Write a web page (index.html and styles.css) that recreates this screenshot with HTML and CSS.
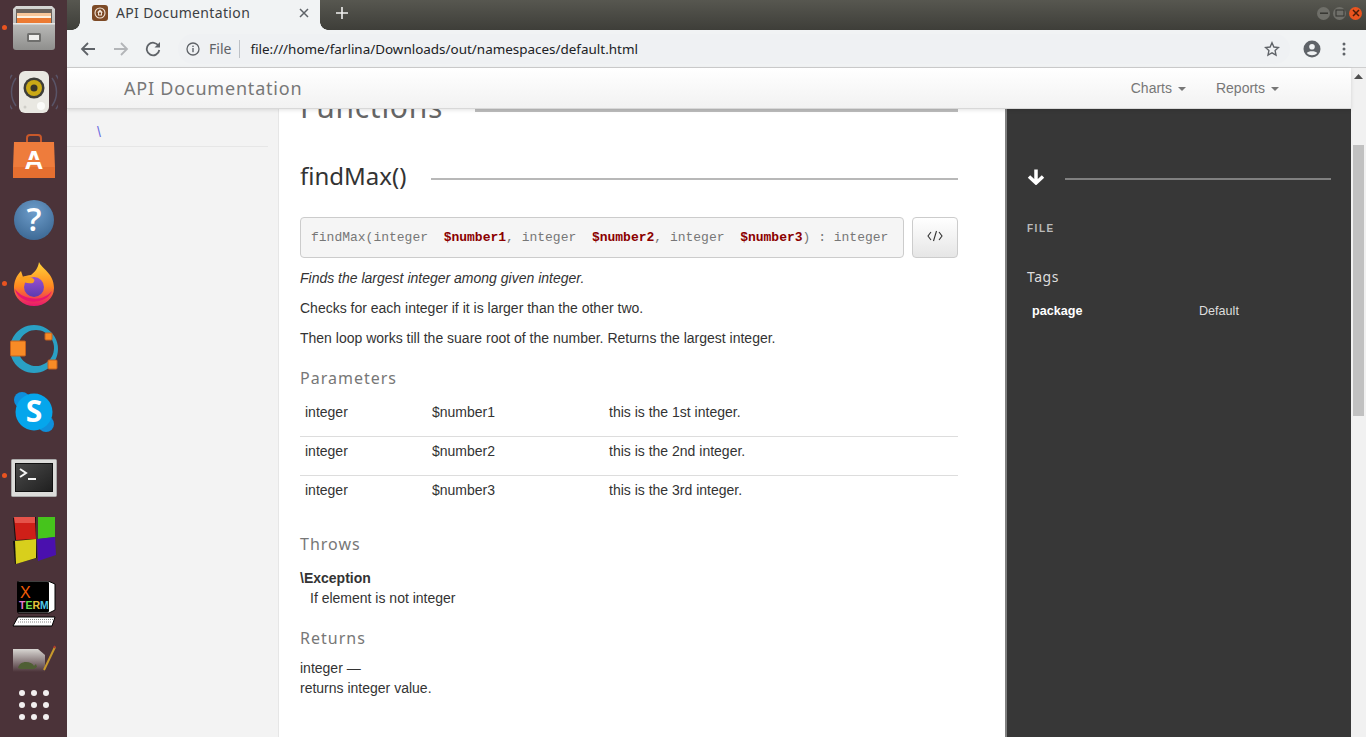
FILE: index.html
```html
<!DOCTYPE html>
<html lang="en">
<head>
    <meta charset="UTF-8">
    <title>API Documentation</title>
    <link rel="stylesheet" href="styles.css">
</head>
<body>
<div class="desktop">
    <aside class="dock">
        <div class="dock-item running">
            <svg width="42" height="44" viewBox="0 0 42 44">
                <defs><linearGradient id="cab" x1="0" y1="0" x2="0" y2="1"><stop offset="0" stop-color="#d6d6d4"/><stop offset="1" stop-color="#8f8f8d"/></linearGradient></defs>
                <path d="M3 0h36l3 3v38q0 3-3 3H3q-3 0-3-3V3z" fill="url(#cab)"/>
                <rect x="3" y="3" width="36" height="14" fill="#6b625c"/>
                <rect x="4" y="7" width="34" height="3" fill="#f9c79a"/>
                <rect x="4" y="10" width="34" height="2" fill="#fff1e0"/>
                <rect x="4" y="12" width="34" height="5" fill="#ec7a32"/>
                <rect x="0" y="17" width="42" height="1.500" fill="#e8e8e6"/>
                <rect x="14" y="27" width="14" height="9" rx="1.500" fill="#6f6f6d"/>
                <rect x="16" y="29" width="10" height="5" fill="#efefed"/>
            </svg>
        </div>
        <div class="dock-item">
            <svg width="48" height="44" viewBox="0 0 48 44">
                <g fill="none" stroke="#6f86ad" stroke-width="1.500" opacity=".4"><path d="M6 8a24 24 0 0 0 0 28"/><path d="M2 5a29 29 0 0 0 0 34"/><path d="M42 8a24 24 0 0 1 0 28"/><path d="M46 5a29 29 0 0 1 0 34"/></g>
                <rect x="9" y="1" width="30" height="42" rx="6" fill="#e9e8e2"/>
                <circle cx="24" cy="18" r="10.500" fill="#3d3d38"/>
                <circle cx="24" cy="18" r="8" fill="#c9a916"/>
                <circle cx="24" cy="18" r="3.500" fill="#38362a"/>
                <circle cx="31" cy="36" r="4" fill="#fbfbf9"/>
                <circle cx="15" cy="37" r="1.500" fill="#cfcec8"/>
            </svg>
        </div>
        <div class="dock-item">
            <svg width="42" height="44" viewBox="0 0 42 44">
                <path d="M14 8V4q0-3 3-3h8q3 0 3 3v4" fill="none" stroke="#c8582a" stroke-width="2"/>
                <path d="M1 8h40l1 26v10H0V34z" fill="#ee7c3c"/>
                <rect x="0" y="33" width="42" height="11" fill="#e56f30"/>
                <text x="21" y="35" class="store-mark">A</text>
                <rect x="12" y="26" width="18" height="2" fill="#ee7c3c"/>
            </svg>
        </div>
        <div class="dock-item">
            <svg width="46" height="46" viewBox="-3 -3 46 46">
                <defs><radialGradient id="helpball" cx=".5" cy=".3" r=".8"><stop offset="0" stop-color="#6e9dca"/><stop offset="1" stop-color="#37638f"/></radialGradient></defs>
                <circle cx="20" cy="20" r="20" fill="url(#helpball)"/>
                <text x="20" y="31" class="help-mark">?</text>
            </svg>
        </div>
        <div class="dock-item running">
            <svg width="42" height="44" viewBox="0 0 42 44">
                <defs>
                    <linearGradient id="fox" x1="0" y1="0" x2="0" y2="1"><stop offset="0" stop-color="#ffd43a"/><stop offset=".55" stop-color="#ff8a1f"/><stop offset="1" stop-color="#e8166f"/></linearGradient>
                    <linearGradient id="globe" x1="0" y1="0" x2="0" y2="1"><stop offset="0" stop-color="#9a4fd0"/><stop offset="1" stop-color="#5b3bb0"/></linearGradient>
                </defs>
                <path d="M26 0c2 6 15 11 15 26a20 18 0 0 1-40 0C1 20 3 14 8 9l2 6c2-1 5-2 8-2 4-3 7-7 8-13z" fill="url(#fox)"/>
                <path d="M2 27a19 15 0 0 0 37 2c-6 7-14 9-22 7C10 35 5 31 2 27z" fill="#e8166f"/>
                <circle cx="21" cy="25" r="10" fill="url(#globe)"/>
                <path d="M6 16c4-2 9-2 13 0 3 1 3 3 1 5-4 1-10 0-14-5z" fill="#f9a11f"/>
            </svg>
        </div>
        <div class="dock-item">
            <svg width="48" height="49" viewBox="0 0 48 49">
                <path fill-rule="evenodd" d="M24 1a24 24 0 1 1-.01 0zM26 6a18 18 0 1 0 .01 0z" fill="#2aa0c4"/>
                <rect x="0.500" y="17" width="15" height="15" rx="1" fill="#f88b26" stroke="#c5611c"/>
                <rect x="35" y="9" width="7" height="7" rx="1" fill="#f88b26" stroke="#c5611c"/>
                <rect x="38" y="36" width="9" height="9" rx="1" fill="#f88b26" stroke="#c5611c"/>
            </svg>
        </div>
        <div class="dock-item">
            <svg width="42" height="42" viewBox="0 0 42 42">
                <circle cx="9" cy="9" r="8" fill="#0f8fdb"/>
                <circle cx="33" cy="33" r="8" fill="#0f8fdb"/>
                <circle cx="21" cy="21" r="18.500" fill="#05a6ec"/>
                <text x="21" y="31" class="skype-mark">S</text>
            </svg>
        </div>
        <div class="dock-item running">
            <svg class="term-icon" width="46" height="38" viewBox="0 0 46 38">
                <defs><linearGradient id="termbg" x1="0" y1="0" x2="1" y2="1"><stop offset="0" stop-color="#4a4a4a"/><stop offset="1" stop-color="#1f1f1f"/></linearGradient></defs>
                <rect x="0.500" y="0.500" width="45" height="37" rx="1" fill="#dcdcda" stroke="#aaa"/>
                <rect x="4.500" y="4.500" width="37" height="28" fill="url(#termbg)" stroke="#111"/>
                <path d="M9 10l6 4-6 4" fill="none" stroke="#f5f5f5" stroke-width="2"/>
                <rect x="17" y="19" width="8" height="2" fill="#f5f5f5"/>
            </svg>
        </div>
        <div class="dock-item">
            <svg width="44" height="48" viewBox="0 0 44 48">
                <path d="M1 2l23-1v23H3z" fill="#111"/>
                <path d="M2 1h21l1 22-20 1z" fill="#cf1f18"/>
                <path d="M2 1h21v6H3z" fill="#e5534a"/>
                <path d="M26 1h17v20l-17 2z" fill="#46c41c"/>
                <path d="M1 25l23-2 1 19L3 48z" fill="#111"/>
                <path d="M3 25l21-2v19L4 48z" fill="#d8cf1c"/>
                <path d="M25 23l18-2 1 18-18 6z" fill="#4a10ae"/>
            </svg>
        </div>
        <div class="dock-item">
            <svg width="44" height="46" viewBox="0 0 44 46">
                <path d="M6 0h30l7 3v26l-6 3H6z" fill="#fff" stroke="#000"/>
                <rect x="5.500" y="1" width="31" height="30" rx="1" fill="#000" stroke="#000"/>
                <path d="M1 45l5-9h37l-3 9z" fill="#fff" stroke="#000"/>
                <path d="M8 38.500h33M6 41h33" stroke="#888" stroke-dasharray="1 1"/>
                <text x="8" y="17" class="xterm-x">X</text>
                <text x="7" y="28" class="xterm-term"><tspan fill="#e67ad0">T</tspan><tspan fill="#6ce04e">E</tspan><tspan fill="#e8c33a">R</tspan><tspan fill="#4fc8e8">M</tspan></text>
            </svg>
        </div>
        <div class="dock-item">
            <svg class="gedit-icon" width="44" height="28" viewBox="0 0 44 28">
                <defs><linearGradient id="page" x1="0" y1="0" x2="0" y2="1"><stop offset="0" stop-color="#d8d6d2"/><stop offset="1" stop-color="#4b3339"/></linearGradient></defs>
                <path d="M1 5h25l7 6v17H1z" fill="url(#page)"/>
                <path d="M6 24c1-4 4-6 8-6s6 1 8 4l2-2 1 3-3 2H9z" fill="#4f5f34"/>
                <path d="M32 26L43 3" stroke="#c8992c" stroke-width="2"/>
                <path d="M42 4l1-2" stroke="#b23a2a" stroke-width="2"/>
            </svg>
        </div>
        <div class="dock-grid">
            <i></i><i></i><i></i><i></i><i></i><i></i><i></i><i></i><i></i>
        </div>
    </aside>

    <div class="browser">
        <div class="tabstrip">
            <div class="tab">
                <svg class="favicon" width="16" height="16" viewBox="0 0 16 16"><rect width="16" height="16" rx="3" fill="#7d4a26"/><circle cx="8" cy="8" r="5" fill="none" stroke="#f1e4d8" stroke-width="1.100"/><path d="M8 4.500l3 3H10v3H6v-3H5z" fill="#f1e4d8"/><rect x="7" y="7.500" width="2" height="2" fill="#7d4a26"/></svg>
                <span class="tab-title">API Documentation</span>
                <svg class="tab-close" width="10" height="10" viewBox="0 0 10 10"><path d="M1 1l8 8M9 1l-8 8" stroke="#5f6368" stroke-width="1.500"/></svg>
            </div>
            <svg class="new-tab" width="14" height="14" viewBox="0 0 14 14"><path d="M7 1v12M1 7h12" stroke="#f1f1ef" stroke-width="1.600"/></svg>
            <div class="window-buttons">
                <span class="win-btn"><svg width="12" height="12" viewBox="0 0 12 12"><rect x="2" y="5.500" width="8" height="1.400" fill="#33332f"/></svg></span>
                <span class="win-btn"><svg width="12" height="12" viewBox="0 0 12 12"><rect x="2" y="3" width="8" height="6" fill="none" stroke="#33332f"/></svg></span>
                <span class="win-btn close"><svg width="12" height="12" viewBox="0 0 12 12"><path d="M3 3l6 6M9 3l-6 6" stroke="#4a1c08" stroke-width="1.500"/></svg></span>
            </div>
        </div>

        <div class="toolbar">
            <svg width="16" height="16" viewBox="0 0 16 16"><path d="M15 8H2M8 2L2 8l6 6" fill="none" stroke="#5f6368" stroke-width="1.800"/></svg>
            <svg width="16" height="16" viewBox="0 0 16 16"><path d="M1 8h13M8 2l6 6-6 6" fill="none" stroke="#b3b5b8" stroke-width="1.800"/></svg>
            <svg width="16" height="16" viewBox="0 0 16 16"><path d="M13.600 5A6.300 6.300 0 1 0 14.300 9" fill="none" stroke="#5f6368" stroke-width="1.800"/><path d="M15 1v5.500H9.500z" fill="#5f6368"/></svg>
            <div class="omnibox">
                <svg width="14" height="14" viewBox="0 0 14 14"><circle cx="7" cy="7" r="6" fill="none" stroke="#5f6368" stroke-width="1.300"/><rect x="6.300" y="6" width="1.400" height="4.200" fill="#5f6368"/><rect x="6.300" y="3.600" width="1.400" height="1.400" fill="#5f6368"/></svg>
                <span class="scheme">File</span>
                <span class="url">file:///home/farlina/Downloads/out/namespaces/default.html</span>
                <svg class="star" width="16" height="16" viewBox="0 0 16 16"><path d="M8 1.800l1.900 4.200 4.600.5-3.400 3.100.9 4.500L8 11.800l-4 2.300.9-4.500L1.500 6.500l4.600-.5z" fill="none" stroke="#5f6368" stroke-width="1.400"/></svg>
            </div>
            <svg class="profile" width="18" height="18" viewBox="0 0 18 18"><circle cx="9" cy="9" r="8.500" fill="#5f6368"/><circle cx="9" cy="6.800" r="2.800" fill="#f1f3f4"/><path d="M3.800 13c1.500-2.300 8.900-2.300 10.400 0-2.600 3-7.800 3-10.400 0z" fill="#f1f3f4"/></svg>
            <svg class="menu-dots" width="4" height="14" viewBox="0 0 4 14"><circle cx="2" cy="2" r="1.500" fill="#5f6368"/><circle cx="2" cy="7" r="1.500" fill="#5f6368"/><circle cx="2" cy="12" r="1.500" fill="#5f6368"/></svg>
        </div>

        <div class="viewport">
            <div class="page">
                <nav class="navbar">
                    <span class="brand">API Documentation</span>
                    <div class="nav-links">
                        <span class="nav-link">Charts<i class="caret"></i></span>
                        <span class="nav-link">Reports<i class="caret"></i></span>
                    </div>
                </nav>

                <div class="columns">
                    <div class="sidebar">
                        <div class="side-item">\</div>
                    </div>

                    <main class="content">
                        <h2 class="section-title"><span>Functions</span></h2>

                        <h3 class="method-title"><span>findMax()</span></h3>

                        <div class="signature-row">
                            <pre class="signature">findMax(integer  <b>$number1</b>, integer  <b>$number2</b>, integer  <b>$number3</b>) : integer</pre>
                            <button class="code-btn"><svg width="16" height="12" viewBox="0 0 16 12"><path d="M4 2L1 6l3 4M12 2l3 4-3 4M9.500 1L6.500 11" fill="none" stroke="#333" stroke-width="1.100"/></svg></button>
                        </div>

                        <p class="summary">Finds the largest integer among given integer.</p>
                        <p>Checks for each integer if it is larger than the other two.</p>
                        <p>Then loop works till the suare root of the number. Returns the largest integer.</p>

                        <h4 class="sub-title">Parameters</h4>
                        <table class="params">
                            <tr><td class="col-type">integer</td><td class="col-name">$number1</td><td>this is the 1st integer.</td></tr>
                            <tr><td class="col-type">integer</td><td class="col-name">$number2</td><td>this is the 2nd integer.</td></tr>
                            <tr><td class="col-type">integer</td><td class="col-name">$number3</td><td>this is the 3rd integer.</td></tr>
                        </table>

                        <h4 class="sub-title throws">Throws</h4>
                        <div class="throws-text">
                            <b>\Exception</b>
                            <div class="indent">If element is not integer</div>
                        </div>

                        <h4 class="sub-title returns">Returns</h4>
                        <div class="returns-text">integer —<br>returns integer value.</div>
                    </main>

                    <aside class="details">
                        <div class="details-head">
                            <svg width="18" height="17" viewBox="0 0 18 17"><path d="M9 1.500v13M2 8.500l7 6.500 7-6.500" fill="none" stroke="#fff" stroke-width="3.500"/></svg>
                            <span class="details-line"></span>
                        </div>
                        <div class="file-label">FILE</div>
                        <div class="tags-title">Tags</div>
                        <div class="tag-row"><b>package</b><span>Default</span></div>
                    </aside>
                </div>
            </div>
            <div class="scrollbar">
                <svg width="9" height="5" viewBox="0 0 9 5"><path d="M0 5l4.500-5L9 5z" fill="#505050"/></svg>
                <div class="thumb"></div>
            </div>
        </div>
    </div>
</div>
</body>
</html>
```

FILE: styles.css
```css
html, body {
    margin: 0;
    height: 100%;
    overflow: hidden;
}
body {
    font-family: "Liberation Sans", Arial, sans-serif;
    font-size: 14px;
    color: #333;
}
.desktop {
    display: flex;
    height: 737px;
}

/* launcher */
.dock {
    width: 67px;
    flex: none;
    background: #4b3339;
    display: flex;
    flex-direction: column;
    align-items: center;
    overflow: hidden;
}
.dock-item {
    height: 64px;
    width: 67px;
    flex: none;
    display: flex;
    align-items: center;
    justify-content: center;
    position: relative;
}
.dock-item:first-child {
    margin-top: -4px;
}
.running::before {
    content: "";
    position: absolute;
    left: 2px;
    top: 29px;
    width: 5px;
    height: 5px;
    border-radius: 50%;
    background: #e95420;
}
.term-icon {
    margin-top: 4px;
}
.gedit-icon {
    margin-bottom: 20px;
}
.dock-grid {
    display: grid;
    grid-template-columns: repeat(3, 6px);
    gap: 6px;
    margin-top: -10px;
}
.dock-grid i {
    width: 6px;
    height: 6px;
    border-radius: 50%;
    background: #f2f0f0;
}
.store-mark {
    font: bold 26px "Liberation Sans", sans-serif;
    fill: #fff;
    text-anchor: middle;
}
.help-mark {
    font: 600 33px "Open Sans", sans-serif;
    fill: #fff;
    text-anchor: middle;
}
.skype-mark {
    font: bold 30px "Open Sans", sans-serif;
    fill: #fff;
    text-anchor: middle;
}
.xterm-x {
    font: 16px "Liberation Sans", sans-serif;
    fill: #f25c05;
}
.xterm-term {
    font: bold 10.5px "Liberation Sans", sans-serif;
}

/* browser chrome */
.browser {
    flex: 1;
    min-width: 0;
    display: flex;
    flex-direction: column;
}
.tabstrip {
    height: 30px;
    flex: none;
    background: linear-gradient(#575750, #3e3e39);
    display: flex;
    align-items: center;
    padding-left: 13px;
}
.tab {
    width: 240px;
    height: 30px;
    box-sizing: border-box;
    background: #f1f3f4;
    display: flex;
    align-items: center;
    padding: 0 11px 5px 12px;
    font-family: "Noto Sans", sans-serif;
    font-size: 14px;
    color: #3c4043;
    position: relative;
}
.tab::before,
.tab::after {
    content: "";
    position: absolute;
    bottom: 0;
    width: 8px;
    height: 8px;
}
.tab::before {
    left: -8px;
    background: radial-gradient(circle at 0 0, transparent 7.5px, #f1f3f4 8px);
}
.tab::after {
    right: -8px;
    background: radial-gradient(circle at 100% 0, transparent 7.5px, #f1f3f4 8px);
}
.tab-title {
    flex: 1;
    margin-left: 8px;
    letter-spacing: .35px;
}
.new-tab {
    margin: 0 0 4px 15px;
}
.window-buttons {
    margin: 0 4px 4px auto;
    display: flex;
    gap: 3px;
}
.win-btn {
    width: 13px;
    height: 13px;
    border-radius: 50%;
    background: #6f6f69;
    display: flex;
    align-items: center;
    justify-content: center;
}
.win-btn.close {
    background: #e9541f;
}
.toolbar {
    height: 38px;
    flex: none;
    box-sizing: border-box;
    background: #f1f3f4;
    border-bottom: 1px solid #cfcfcf;
    display: flex;
    align-items: center;
    padding: 0 20px 0 13px;
    gap: 16.5px;
}
.omnibox {
    flex: 1;
    height: 30px;
    padding: 0 10px 0 8.5px;
    box-sizing: border-box;
    border-radius: 15px;
    background: #eff1f3;
    display: flex;
    align-items: center;
    font-family: "Noto Sans", sans-serif;
    font-size: 14px;
}
.scheme {
    color: #5f6368;
    margin-left: 9px;
    padding-right: 8px;
    border-right: 1px solid #bdc1c6;
    line-height: 18px;
}
.url {
    margin-left: 10px;
    color: #202124;
    flex: 1;
    font-size: 13.45px;
}
.profile {
    margin-left: -3.5px;
}
.menu-dots {
    margin-left: 4.5px;
}

/* page */
.viewport {
    flex: 1;
    min-height: 0;
    display: flex;
}
.page {
    flex: 1;
    min-width: 0;
    display: flex;
    flex-direction: column;
}
.navbar {
    height: 41px;
    flex: none;
    box-sizing: border-box;
    background: linear-gradient(#fff, #f2f2f2);
    border-bottom: 1px solid #d8d8d8;
    box-shadow: 0 1px 4px rgba(0, 0, 0, .12);
    display: flex;
    align-items: center;
    justify-content: space-between;
    padding: 0 72px 0 57px;
    position: relative;
    z-index: 2;
}
.brand {
    font-family: "Noto Sans", sans-serif;
    font-size: 18px;
    letter-spacing: .8px;
    color: #777;
}
.nav-links {
    display: flex;
    gap: 30px;
}
.nav-link {
    color: #777;
    font-size: 14px;
}
.caret {
    display: inline-block;
    margin-left: 6px;
    vertical-align: 2px;
    border-top: 4px solid #777;
    border-left: 4px solid transparent;
    border-right: 4px solid transparent;
}
.columns {
    flex: 1;
    min-height: 0;
    display: flex;
    overflow: hidden;
}
.sidebar {
    width: 211px;
    flex: none;
    background: #f3f3f3;
    border-right: 1px solid #e6e6e6;
}
.side-item {
    width: 201px;
    height: 38px;
    box-sizing: border-box;
    padding: 15px 0 0 30px;
    color: #6a6ae0;
    font-size: 14px;
    border-bottom: 1px solid #e6e6e6;
}
.content {
    width: 726px;
    flex: none;
    box-sizing: border-box;
    padding: 0 47px 0 21px;
    background: #fff;
    overflow: hidden;
}
.content p {
    margin: 0 0 10px;
    line-height: 20px;
}
.section-title,
.method-title {
    display: flex;
    align-items: center;
    font-family: "Noto Sans", sans-serif;
    font-weight: 400;
    margin: 0;
}
.section-title::after,
.method-title::after {
    content: "";
    flex: 1;
    height: 2px;
    background: #b8b8b8;
}
.section-title {
    font-size: 30px;
    letter-spacing: .7px;
    color: #666;
    height: 20px;
    line-height: 20px;
    align-items: flex-start;
    overflow: hidden;
}
.section-title::after {
    height: 3px;
    background: #bdbdbd;
}
.section-title span {
    margin-right: 32px;
    margin-top: -12px;
}
.method-title {
    font-size: 24px;
    color: #333;
    height: 36px;
    margin-top: 28px;
}
.method-title::after {
    margin-top: 8px;
}
.method-title span {
    margin-right: 25px;
}
.signature-row {
    display: flex;
    gap: 8px;
    margin-top: 24px;
    margin-bottom: 10px;
}
.signature {
    flex: 1;
    margin: 0;
    height: 41px;
    box-sizing: border-box;
    padding: 0 10px;
    background: #f5f5f5;
    border: 1px solid #ccc;
    border-radius: 4px;
    font-family: "Liberation Mono", monospace;
    font-size: 13px;
    line-height: 39px;
    color: #777;
}
.signature b {
    color: #8b0000;
}
.code-btn {
    width: 46px;
    height: 41px;
    padding: 0;
    background: linear-gradient(#fff, #e6e6e6);
    border: 1px solid #ccc;
    border-radius: 4px;
}
.summary {
    font-style: italic;
}
.sub-title {
    font-family: "Noto Sans", sans-serif;
    font-weight: 400;
    font-size: 16px;
    letter-spacing: 1px;
    color: #777;
    margin: 19px 0 0;
    line-height: 22px;
}
.params {
    width: 100%;
    table-layout: fixed;
    border-collapse: collapse;
    margin-top: 8px;
}
.params td {
    padding: 5px 5px 0;
    height: 39px;
    vertical-align: top;
    line-height: 20px;
    box-sizing: border-box;
}
.params tr + tr td {
    border-top: 1px solid #ddd;
    padding-top: 4px;
}
.params .col-type {
    width: 127px;
}
.params .col-name {
    width: 177px;
}
.throws {
    margin-top: 19px;
}
.throws-text {
    margin-top: 13px;
    line-height: 20px;
}
.indent {
    padding-left: 10px;
}
.returns {
    margin-top: 19px;
}
.returns-text {
    margin-top: 9px;
    line-height: 20px;
}
.details {
    flex: 1;
    box-sizing: border-box;
    background: #373737;
    border-left: 2px solid #808080;
    padding: 59px 20px 0 20px;
    color: #fff;
}
.details-head {
    display: flex;
    align-items: center;
    gap: 20px;
}
.details-line {
    flex: 1;
    height: 2px;
    margin-top: 4px;
    background: #808080;
}
.file-label {
    margin-top: 38px;
    font-size: 10px;
    font-weight: bold;
    letter-spacing: 1.5px;
    color: #bbb;
}
.tags-title {
    margin-top: 33px;
    font-family: "Noto Sans", sans-serif;
    font-size: 14px;
    letter-spacing: .5px;
    color: #ddd;
}
.tag-row {
    display: flex;
    margin-top: 18px;
    padding-left: 5px;
    font-size: 12.6px;
    color: #ddd;
}
.tag-row b {
    width: 167px;
    color: #fff;
}
.scrollbar {
    width: 15px;
    flex: none;
    background: #f1f1f1;
    display: flex;
    flex-direction: column;
    align-items: center;
    padding-top: 6px;
    box-sizing: border-box;
}
.thumb {
    width: 11px;
    height: 271px;
    margin-top: 66px;
    background: #c1c1c1;
}
```
